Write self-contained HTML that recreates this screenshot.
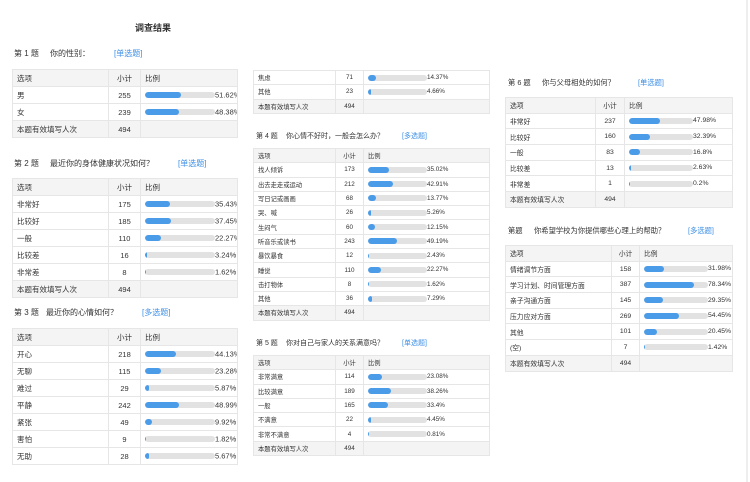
<!DOCTYPE html><html><head><meta charset="utf-8"><style>
body{margin:0;width:750px;height:482px;background:#fff;position:relative;overflow:hidden;font-family:"Liberation Sans","Noto Sans CJK SC",sans-serif;color:#333}
.rb{position:absolute;left:746px;top:0;width:2px;height:482px;background:#eee}
.h{position:absolute;white-space:nowrap}
.h b{font-weight:normal;display:inline-block}
.h i{font-style:normal;color:#3b8ee6}
table{position:absolute;border-collapse:collapse;table-layout:fixed}
td{border:1px solid #e6e6e6;padding:0 0 0 4px;white-space:nowrap;overflow:hidden}
tr.g td{background:#f4f4f4}
td.c{text-align:center;padding:0}
.bar{display:inline-block;vertical-align:middle;height:6px;border-radius:3px;background:#e2e2e2;position:relative;overflow:hidden}
.bar s{position:absolute;left:0;top:0;bottom:0;background:#4a9be8;border-radius:3px}
.p{vertical-align:middle}
.t1{left:12px;width:226px;font-size:7.5px}.t1 td{height:16px}.t1 .bar{width:70px}
.t2{left:253px;width:237px;font-size:6.3px}.t2 td{height:13.3px}.t2 .bar{width:59px}
.t3{left:505px;width:228px;font-size:6.8px}.t3 td{height:14.7px}.t3 .bar{width:64px}
</style></head><body>
<div class="rb"></div>
<div class="h" style="left:135px;top:21px;font-size:9px;font-weight:bold">调查结果</div>

<div class="h" style="left:14px;top:48px;font-size:8px"><b style="width:36px">第 1 题</b><b style="width:64px">你的性别：</b><i>[单选题]</i></div>
<table class="t1" style="top:69px"><col style="width:96px"><col style="width:32px"><col>
<tr class="g"><td>选项</td><td class="c">小计</td><td>比例</td></tr>
<tr><td>男</td><td class="c">255</td><td><span class="bar"><s style="width:51.6%"></s></span><span class="p">51.62%</span></td></tr>
<tr><td>女</td><td class="c">239</td><td><span class="bar"><s style="width:48.4%"></s></span><span class="p">48.38%</span></td></tr>
<tr class="g"><td>本题有效填写人次</td><td class="c">494</td><td></td></tr></table>

<div class="h" style="left:14px;top:158px;font-size:8px"><b style="width:36px">第 2 题</b><b style="width:128px">最近你的身体健康状况如何？</b><i>[单选题]</i></div>
<table class="t1" style="top:178px"><col style="width:96px"><col style="width:32px"><col>
<tr class="g"><td>选项</td><td class="c">小计</td><td>比例</td></tr>
<tr><td>非常好</td><td class="c">175</td><td><span class="bar"><s style="width:35.4%"></s></span><span class="p">35.43%</span></td></tr>
<tr><td>比较好</td><td class="c">185</td><td><span class="bar"><s style="width:37.5%"></s></span><span class="p">37.45%</span></td></tr>
<tr><td>一般</td><td class="c">110</td><td><span class="bar"><s style="width:22.3%"></s></span><span class="p">22.27%</span></td></tr>
<tr><td>比较差</td><td class="c">16</td><td><span class="bar"><s style="width:3.2%"></s></span><span class="p">3.24%</span></td></tr>
<tr><td>非常差</td><td class="c">8</td><td><span class="bar"><s style="width:1.6%"></s></span><span class="p">1.62%</span></td></tr>
<tr class="g"><td>本题有效填写人次</td><td class="c">494</td><td></td></tr></table>

<div class="h" style="left:14px;top:307px;font-size:8px"><b style="width:32px">第 3 题</b><b style="width:96px">最近你的心情如何？</b><i>[多选题]</i></div>
<table class="t1" style="top:328px"><col style="width:96px"><col style="width:32px"><col>
<tr class="g"><td>选项</td><td class="c">小计</td><td>比例</td></tr>
<tr><td>开心</td><td class="c">218</td><td><span class="bar"><s style="width:44.1%"></s></span><span class="p">44.13%</span></td></tr>
<tr><td>无聊</td><td class="c">115</td><td><span class="bar"><s style="width:23.3%"></s></span><span class="p">23.28%</span></td></tr>
<tr><td>难过</td><td class="c">29</td><td><span class="bar"><s style="width:5.9%"></s></span><span class="p">5.87%</span></td></tr>
<tr><td>平静</td><td class="c">242</td><td><span class="bar"><s style="width:49%"></s></span><span class="p">48.99%</span></td></tr>
<tr><td>紧张</td><td class="c">49</td><td><span class="bar"><s style="width:9.9%"></s></span><span class="p">9.92%</span></td></tr>
<tr><td>害怕</td><td class="c">9</td><td><span class="bar"><s style="width:1.8%"></s></span><span class="p">1.82%</span></td></tr>
<tr><td>无助</td><td class="c">28</td><td><span class="bar"><s style="width:5.7%"></s></span><span class="p">5.67%</span></td></tr></table>

<table class="t2" style="top:70px"><col style="width:82px"><col style="width:28px"><col>
<tr><td>焦虑</td><td class="c">71</td><td><span class="bar"><s style="width:14.4%"></s></span><span class="p">14.37%</span></td></tr>
<tr><td>其他</td><td class="c">23</td><td><span class="bar"><s style="width:4.7%"></s></span><span class="p">4.66%</span></td></tr>
<tr class="g"><td>本题有效填写人次</td><td class="c">494</td><td></td></tr></table>

<div class="h" style="left:256px;top:131px;font-size:7px"><b style="width:30px">第 4 题</b><b style="width:116px">你心情不好时，一般会怎么办？</b><i>[多选题]</i></div>
<table class="t2" style="top:148px"><col style="width:82px"><col style="width:28px"><col>
<tr class="g"><td>选项</td><td class="c">小计</td><td>比例</td></tr>
<tr><td>找人倾诉</td><td class="c">173</td><td><span class="bar"><s style="width:35%"></s></span><span class="p">35.02%</span></td></tr>
<tr><td>出去走走或运动</td><td class="c">212</td><td><span class="bar"><s style="width:42.9%"></s></span><span class="p">42.91%</span></td></tr>
<tr><td>写日记或画画</td><td class="c">68</td><td><span class="bar"><s style="width:13.8%"></s></span><span class="p">13.77%</span></td></tr>
<tr><td>哭、喊</td><td class="c">26</td><td><span class="bar"><s style="width:5.3%"></s></span><span class="p">5.26%</span></td></tr>
<tr><td>生闷气</td><td class="c">60</td><td><span class="bar"><s style="width:12.1%"></s></span><span class="p">12.15%</span></td></tr>
<tr><td>听音乐或读书</td><td class="c">243</td><td><span class="bar"><s style="width:49.2%"></s></span><span class="p">49.19%</span></td></tr>
<tr><td>暴饮暴食</td><td class="c">12</td><td><span class="bar"><s style="width:2.4%"></s></span><span class="p">2.43%</span></td></tr>
<tr><td>睡觉</td><td class="c">110</td><td><span class="bar"><s style="width:22.3%"></s></span><span class="p">22.27%</span></td></tr>
<tr><td>击打物体</td><td class="c">8</td><td><span class="bar"><s style="width:1.6%"></s></span><span class="p">1.62%</span></td></tr>
<tr><td>其他</td><td class="c">36</td><td><span class="bar"><s style="width:7.3%"></s></span><span class="p">7.29%</span></td></tr>
<tr class="g"><td>本题有效填写人次</td><td class="c">494</td><td></td></tr></table>

<div class="h" style="left:256px;top:338px;font-size:7px"><b style="width:30px">第 5 题</b><b style="width:116px">你对自己与家人的关系满意吗？</b><i>[单选题]</i></div>
<table class="t2" style="top:355px"><col style="width:82px"><col style="width:28px"><col>
<tr class="g"><td>选项</td><td class="c">小计</td><td>比例</td></tr>
<tr><td>非常满意</td><td class="c">114</td><td><span class="bar"><s style="width:23.1%"></s></span><span class="p">23.08%</span></td></tr>
<tr><td>比较满意</td><td class="c">189</td><td><span class="bar"><s style="width:38.3%"></s></span><span class="p">38.26%</span></td></tr>
<tr><td>一般</td><td class="c">165</td><td><span class="bar"><s style="width:33.4%"></s></span><span class="p">33.4%</span></td></tr>
<tr><td>不满意</td><td class="c">22</td><td><span class="bar"><s style="width:4.5%"></s></span><span class="p">4.45%</span></td></tr>
<tr><td>非常不满意</td><td class="c">4</td><td><span class="bar"><s style="width:0.8%"></s></span><span class="p">0.81%</span></td></tr>
<tr class="g"><td>本题有效填写人次</td><td class="c">494</td><td></td></tr></table>

<div class="h" style="left:508px;top:78px;font-size:7.3px"><b style="width:34px">第 6 题</b><b style="width:96px">你与父母相处的如何？</b><i>[单选题]</i></div>
<table class="t3" style="top:97px"><col style="width:90px"><col style="width:29px"><col>
<tr class="g"><td>选项</td><td class="c">小计</td><td>比例</td></tr>
<tr><td>非常好</td><td class="c">237</td><td><span class="bar"><s style="width:48%"></s></span><span class="p">47.98%</span></td></tr>
<tr><td>比较好</td><td class="c">160</td><td><span class="bar"><s style="width:32.4%"></s></span><span class="p">32.39%</span></td></tr>
<tr><td>一般</td><td class="c">83</td><td><span class="bar"><s style="width:16.8%"></s></span><span class="p">16.8%</span></td></tr>
<tr><td>比较差</td><td class="c">13</td><td><span class="bar"><s style="width:2.6%"></s></span><span class="p">2.63%</span></td></tr>
<tr><td>非常差</td><td class="c">1</td><td><span class="bar"><s style="width:0.2%"></s></span><span class="p">0.2%</span></td></tr>
<tr class="g"><td>本题有效填写人次</td><td class="c">494</td><td></td></tr></table>

<div class="h" style="left:508px;top:226px;font-size:7.3px"><b style="width:26px">第题</b><b style="width:154px">你希望学校为你提供哪些心理上的帮助？</b><i>[多选题]</i></div>
<table class="t3" style="top:245px"><col style="width:106px"><col style="width:28px"><col>
<tr class="g"><td>选项</td><td class="c">小计</td><td>比例</td></tr>
<tr><td>情绪调节方面</td><td class="c">158</td><td><span class="bar"><s style="width:32%"></s></span><span class="p">31.98%</span></td></tr>
<tr><td>学习计划、时间管理方面</td><td class="c">387</td><td><span class="bar"><s style="width:78.3%"></s></span><span class="p">78.34%</span></td></tr>
<tr><td>亲子沟通方面</td><td class="c">145</td><td><span class="bar"><s style="width:29.4%"></s></span><span class="p">29.35%</span></td></tr>
<tr><td>压力应对方面</td><td class="c">269</td><td><span class="bar"><s style="width:54.5%"></s></span><span class="p">54.45%</span></td></tr>
<tr><td>其他</td><td class="c">101</td><td><span class="bar"><s style="width:20.4%"></s></span><span class="p">20.45%</span></td></tr>
<tr><td>(空)</td><td class="c">7</td><td><span class="bar"><s style="width:1.4%"></s></span><span class="p">1.42%</span></td></tr>
<tr class="g"><td>本题有效填写人次</td><td class="c">494</td><td></td></tr></table>
</body></html>
